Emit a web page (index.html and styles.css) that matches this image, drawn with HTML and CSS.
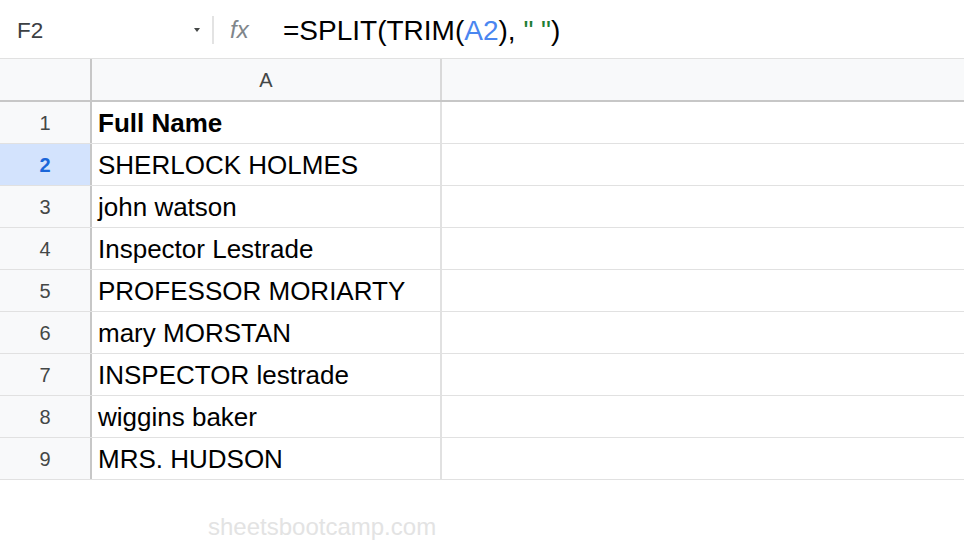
FILE: index.html
```html
<!DOCTYPE html>
<html>
<head>
<meta charset="utf-8">
<link rel="stylesheet" href="styles.css">
</head>
<body>
<div class="app">
  <div class="fbar">
    <div class="namebox"><span class="ref">F2</span><span class="caret"></span></div>
    <div class="sep"></div>
    <div class="fx">fx</div>
    <div class="formula">=SPLIT(TRIM(<span class="r">A2</span>), <span class="s">" "</span>)</div>
  </div>
  <div class="grid">
    <div class="hrow"><div class="corner"></div><div class="colh">A</div><div class="colh rest"></div></div>
    <div class="row"><div class="rh">1</div><div class="cell bold">Full Name</div><div class="cell rest"></div></div>
    <div class="row"><div class="rh sel">2</div><div class="cell">SHERLOCK HOLMES</div><div class="cell rest"></div></div>
    <div class="row"><div class="rh">3</div><div class="cell">john watson</div><div class="cell rest"></div></div>
    <div class="row"><div class="rh">4</div><div class="cell">Inspector Lestrade</div><div class="cell rest"></div></div>
    <div class="row"><div class="rh">5</div><div class="cell">PROFESSOR MORIARTY</div><div class="cell rest"></div></div>
    <div class="row"><div class="rh">6</div><div class="cell">mary MORSTAN</div><div class="cell rest"></div></div>
    <div class="row"><div class="rh">7</div><div class="cell">INSPECTOR lestrade</div><div class="cell rest"></div></div>
    <div class="row"><div class="rh">8</div><div class="cell">wiggins baker</div><div class="cell rest"></div></div>
    <div class="row"><div class="rh">9</div><div class="cell">MRS. HUDSON</div><div class="cell rest"></div></div>
  </div>
  <div class="wm">sheetsbootcamp.com</div>
</div>
</body>
</html>
```
FILE: styles.css
```css
* { box-sizing: border-box; }
html, body { margin: 0; padding: 0; background: #fff; }
body { font-family: "Liberation Sans", Arial, sans-serif; width: 964px; height: 546px; overflow: hidden; }

.fbar {
  height: 59px;
  display: flex;
  align-items: center;
  border-bottom: 1px solid #e1e1e1;
}
.namebox {
  width: 212px;
  height: 100%;
  display: flex;
  align-items: center;
  justify-content: space-between;
  padding: 0 12px 0 17px;
}
.ref { font-size: 22.5px; color: #3c4043; margin-top: 3px; }
.caret {
  width: 0; height: 0;
  border-left: 3px solid transparent;
  border-right: 3px solid transparent;
  border-top: 4px solid #444746;
  margin-top: 1px;
}
.sep { width: 2px; height: 28px; background: #e3e3e3; margin-top: 1px; }
.fx {
  width: 69px;
  padding-left: 16px;
  font-size: 24px;
  font-style: italic;
  color: #80868b;
  margin-top: 1px;
}
.formula { font-size: 28px; color: #000; margin-top: 4px; }
.formula .r { color: #4a86f0; }
.formula .s { color: #1e7e34; }

.grid { display: flex; flex-direction: column; }
.hrow {
  display: flex;
  height: 43px;
  background: #f8f9fa;
  border-bottom: 2px solid #c7c7c7;
}
.corner { width: 92px; border-right: 2px solid #c7c7c7; }
.colh {
  width: 350px;
  border-right: 2px solid #d9d9d9;
  display: flex;
  align-items: center;
  justify-content: center;
  font-size: 20px;
  color: #444746;
  padding-top: 1px;
}
.colh.rest { flex: 1; border-right: none; }

.row { display: flex; height: 42px; border-bottom: 1px solid #e1e1e1; }
.rh {
  width: 92px;
  background: #f8f9fa;
  border-right: 2px solid #c7c7c7;
  display: flex;
  align-items: center;
  justify-content: center;
  font-size: 20px;
  color: #444746;
  padding-top: 1px;
}
.rh.sel { background: #d3e3fd; color: #1a66d9; font-weight: bold; }
.cell {
  width: 350px;
  border-right: 2px solid #e1e1e1;
  display: flex;
  align-items: center;
  padding-left: 6px;
  padding-top: 2px;
  font-size: 26px;
  color: #000;
  white-space: nowrap;
}
.cell.bold { font-weight: bold; }
.cell.rest { flex: 1; border-right: none; }

.wm {
  padding: 33px 0 0 208px;
  font-size: 24px;
  color: #e3e3e3;
}
```
